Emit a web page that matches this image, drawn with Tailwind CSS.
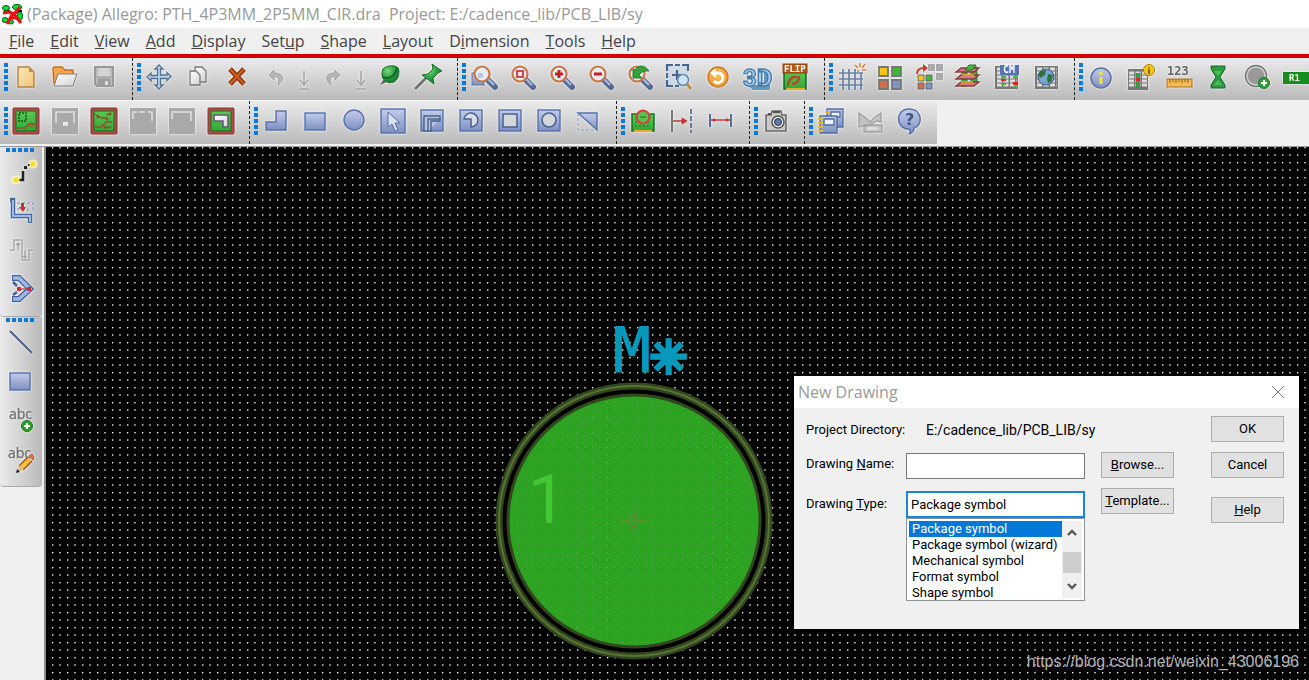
<!DOCTYPE html>
<html lang="en">
<head>
<meta charset="utf-8">
<title>Allegro Package Designer</title>
<script src="https://cdn.jsdelivr.net/npm/@tailwindcss/browser@4"></script>
</head>
<body class="flex h-screen flex-col overflow-hidden bg-[#f0f0f0] font-['Open_Sans','Noto_Sans',sans-serif] text-[#444]">

<svg class="absolute size-0" aria-hidden="true">
  <defs>
    <linearGradient id="blue" x1="0" y1="0" x2="0" y2="1"><stop offset="0" stop-color="#c3ccea"/><stop offset="1" stop-color="#7d90c4"/></linearGradient>
    <linearGradient id="green" x1="0" y1="0" x2="0" y2="1"><stop offset="0" stop-color="#55cc50"/><stop offset="1" stop-color="#35a535"/></linearGradient>
    <linearGradient id="sand" x1="0" y1="0" x2="1" y2="1"><stop offset="0" stop-color="#fbe9b8"/><stop offset="1" stop-color="#eec678"/></linearGradient>
    <linearGradient id="paper" x1="0" y1="0" x2="1" y2="1"><stop offset="0" stop-color="#fff"/><stop offset="1" stop-color="#d2d2d2"/></linearGradient>
    <radialGradient id="ball" cx=".35" cy=".3" r=".8"><stop offset="0" stop-color="#7ddb7a"/><stop offset=".5" stop-color="#2ba043"/><stop offset="1" stop-color="#0f6c24"/></radialGradient>
    <radialGradient id="orange" cx=".5" cy=".4" r=".6"><stop offset="0" stop-color="#fbc060"/><stop offset="1" stop-color="#f09a35"/></radialGradient>
    <pattern id="dots" width="15" height="15" patternUnits="userSpaceOnUse" x="6" y="0">
      <rect width="1" height="1" fill="#fff"/><rect y="1" width="1" height="1" fill="#777"/><rect x="1" width="1" height="1" fill="#555"/>
      <rect x="7" width="2" height="1" fill="#aaa"/><rect x="7" y="1" width="2" height="1" fill="#444"/>
      <rect y="7" width="1" height="2" fill="#aaa"/><rect x="1" y="7" width="1" height="2" fill="#444"/>
      <rect x="7" y="7" width="2" height="2" fill="#777"/>
    </pattern>
  </defs>
</svg>

<header class="flex h-7 shrink-0 items-center gap-px bg-white pl-0.5">
  <svg class="size-6 shrink-0" viewBox="0 0 24 24" aria-hidden="true">
    <path d="M2 9h5l4 4 6-4 3 0M3 20l4-1 2-3 5 0 4 3M11 6l4-2 4 3" stroke="#111" stroke-width="2" fill="none"/>
    <g fill="#0be03a" stroke="#075a16"><ellipse cx="4" cy="6" rx="3.5" ry="2.5"/><ellipse cx="15" cy="5" rx="4.5" ry="2.5"/><ellipse cx="3" cy="18" rx="3" ry="2.5"/><ellipse cx="18" cy="14" rx="2.5" ry="4"/><ellipse cx="9" cy="20" rx="2.5" ry="2"/></g>
    <path d="M1 11l6-1 5 2 6-7M5 22l5-9M11 11l8 10M7 16h8" stroke="#e81414" stroke-width="3.2" fill="none"/>
  </svg>
  <h1 class="text-base whitespace-pre text-[#999]">(Package) Allegro: PTH_4P3MM_2P5MM_CIR.dra  Project: E:/cadence_lib/PCB_LIB/sy</h1>
</header>

<nav class="flex h-[26px] shrink-0 items-center gap-4 pl-[9px] text-base" aria-label="Menu bar">
  <button><u>F</u>ile</button><button><u>E</u>dit</button><button><u>V</u>iew</button><button><u>A</u>dd</button><button><u>D</u>isplay</button><button>Set<u>u</u>p</button><button><u>S</u>hape</button><button><u>L</u>ayout</button><button>D<u>i</u>mension</button><button><u>T</u>ools</button><button><u>H</u>elp</button>
</nav>
<div class="h-1 shrink-0 bg-[#d20000]"></div>

<div id="row1" class="flex h-[43px] shrink-0 overflow-hidden border-b border-[#f4f4f4]"></div>
<div id="row2" class="flex h-[43px] shrink-0"></div>

<div class="mt-[2px] flex min-h-0 flex-1 border-t border-[#999]">
  <aside id="side" class="flex w-[46px] shrink-0 flex-col border-r-2 border-[#8c8c8c] pr-[2px]"></aside>

  <main class="relative min-w-0 flex-1 overflow-hidden bg-black">
    <svg class="absolute inset-0 size-full" aria-label="Drawing canvas">
      <rect width="100%" height="100%" fill="url(#dots)"/>
      <g fill="none">
        <circle cx="588" cy="374" r="135" fill="#000" stroke="#33471e" stroke-width="7"/>
        <circle cx="588" cy="374" r="135" stroke="#567434" stroke-width="2"/>
        <circle cx="588" cy="374" r="126" fill="#2ca321" stroke="#33471e" stroke-width="3"/>
      </g>
      <circle cx="588" cy="374" r="123" fill="url(#dots)" opacity=".3"/>
      <g stroke="#70853a" fill="none"><circle cx="588" cy="374" r="6"/><path d="M575 374h26M588 361v26"/></g>
      <text x="567" y="225" font-family="DejaVu Sans Mono" font-size="63" fill="#0699bb" stroke="#0699bb" stroke-width="1">M</text>
      <text x="604" y="226" font-family="DejaVu Sans" font-size="45" fill="#0699bb" stroke="#0699bb" stroke-width="4">✳</text>
      <text x="482" y="376" font-family="Roboto" font-size="68" fill="#45c734">1</text>
    </svg>

    <section role="dialog" aria-labelledby="dlg" class="absolute top-[229px] right-2.5 h-[253px] w-[505px] bg-[#f0f0f0] text-[13px] leading-4 text-black font-['Roboto',sans-serif]">
      <div class="flex h-8 items-center justify-between bg-white pr-3.5 pl-1">
        <h2 id="dlg" class="font-['Open_Sans','Noto_Sans',sans-serif] text-base text-[#999]">New Drawing</h2>
        <button aria-label="Close"><svg class="size-[14px]" viewBox="0 0 14 14" stroke="#777" fill="none"><path d="M1 1l12 12M13 1L1 13"/></svg></button>
      </div>
      <form class="flex pt-2 pr-[15px] pl-3">
        <div class="grid flex-none grid-cols-[100px_179px] grid-rows-[28px_35px_39px] items-center">
          <span class="whitespace-nowrap">Project Directory:</span><span class="pl-5 text-sm leading-4">E:/cadence_lib/PCB_LIB/sy</span>
          <label for="dn" class="pt-1">Drawing <u>N</u>ame:</label>
          <input id="dn" type="text" class="h-[26px] w-full self-end border border-[#777] bg-white px-1">
          <label for="dt" class="self-end pb-1.5">Drawing <u>T</u>ype:</label>
          <div class="relative self-end">
            <select id="dt" class="block h-[27px] w-full appearance-none border-2 border-[#1b84dc] bg-white px-[3px]"><option>Package symbol</option><option>Package symbol (wizard)</option><option>Mechanical symbol</option><option>Format symbol</option><option>Shape symbol</option></select>
            <div class="absolute top-full left-0 flex h-[83px] w-full overflow-hidden border border-[#8a929c] bg-white p-[2px]">
              <ul role="listbox" class="flex-1">
                <li role="option" aria-selected="true" class="bg-[#0078d7] pl-[3px] text-white">Package symbol</li><li role="option" class="pl-[3px] whitespace-nowrap">Package symbol (wizard)</li><li role="option" class="pl-[3px]">Mechanical symbol</li><li role="option" class="pl-[3px]">Format symbol</li><li role="option" class="pl-[3px]">Shape symbol</li>
              </ul>
              <div class="flex w-5 shrink-0 flex-col items-center justify-between bg-[#f0f0f0] py-1">
                <button type="button" aria-label="Scroll up"><svg class="block h-4 w-[10px]" viewBox="0 0 10 16" fill="none" stroke="#555" stroke-width="2.4"><path d="M1 10l4-4 4 4"/></svg></button>
                <span class="mt-1.5 h-[21px] w-[18px] bg-[#cdcdcd]"></span>
                <button type="button" aria-label="Scroll down"><svg class="block h-4 w-[10px]" viewBox="0 0 10 16" fill="none" stroke="#555" stroke-width="2.4"><path d="M1 6l4 4 4-4"/></svg></button>
              </div>
            </div>
          </div>
        </div>
        <div class="mt-9 ml-4 flex w-[73px] flex-col gap-2.5">
          <button type="button" class="h-[26px] border border-[#adadad] bg-[#e1e1e1]"><u>B</u>rowse...</button>
          <button type="button" class="h-[26px] border border-[#adadad] bg-[#e1e1e1]"><u>T</u>emplate...</button>
        </div>
        <div class="ml-auto flex w-[73px] flex-col">
          <button type="button" class="h-[26px] border border-[#adadad] bg-[#e1e1e1]">OK</button>
          <button type="button" class="mt-2.5 h-[26px] border border-[#adadad] bg-[#e1e1e1]">Cancel</button>
          <button type="button" class="mt-[19px] h-[26px] border border-[#adadad] bg-[#e1e1e1]"><u>H</u>elp</button>
        </div>
      </form>
    </section>
    <p class="absolute right-2.5 bottom-1.5 font-['Liberation_Sans',sans-serif] text-base text-[#b4b4b4]">https://blog.csdn.net/weixin_43006196</p>
  </main>
</div>

<script>
const B = 'fill="url(#blue)" stroke="#5570a5" stroke-width="1.4"';
const lens = (inner) => `<path d="M19 19l7 7" stroke="#566894" stroke-width="6" stroke-linecap="round"/><path d="M18 17l7 7" stroke="#a9b8d8" stroke-width="2.4"/><circle cx="13" cy="13" r="7.5" fill="#e6ecf5" stroke="#c87742" stroke-width="2.2"/>${inner}`;
const board = (inner) => `<rect x="3" y="3" width="26" height="26" rx="1" fill="#b64a48" stroke="#7c3030"/><rect x="6" y="6" width="20" height="20" fill="url(#green)" stroke="#186c22"/>${inner}`;
const grayBoard = (inner) => `<rect x="3" y="3" width="26" height="26" fill="#a9a9a9"/>${inner}`;
const cells = (x, y) => `<rect x="${x}" y="${y}" width="23" height="23" fill="#777"/><path d="M${x+2} ${y+3}h20M${x+2} ${y+7}h20M${x+2} ${y+11}h20M${x+2} ${y+15}h20M${x+2} ${y+19}h20" stroke="#ddd" stroke-width="2.8" stroke-dasharray="5 1.5"/>`;
const I = {
 new: ['New', '<path d="M8 6h11l5 5v15H8z" fill="url(#sand)" stroke="#b9803c" stroke-width="1.4"/><path d="M19 6v5h5z" fill="#c98c42"/>'],
 open: ['Open', '<path d="M5 23L4 8q0-2 2-2h7l3 3h8v4" fill="#f6a64c" stroke="#c06d1f" stroke-width="1.4"/><path d="M5 25l4-12h19l-4 12z" fill="url(#paper)" stroke="#7d7d7d"/>'],
 save: ['Save', '<path d="M7 6h18v19H9l-2-2z" fill="#bdbdbd" stroke="#999" stroke-width="2"/><path d="M10 7h12v8H10z" fill="#d4d4d4"/><path d="M7 16h18M10 18h12v7H10z" fill="#9e9e9e" stroke="#9e9e9e"/><path d="M17 20h3v4h-3z" fill="#ddd"/>'],
 move: ['Move', '<path d="M16 4l4 4h-2.500v6H24v-2.500l4 4-4 4V17.500h-6.500V24H20l-4 4-4-4h2.500v-6.500H8V20l-4-4 4-4v2.500h6.500V8H12z" fill="#b9d2e4" stroke="#4f7190" stroke-width="1.3"/>'],
 copy: ['Copy', '<path d="M13 6h7l4 4v11H13z" fill="url(#paper)" stroke="#777" stroke-width="1.3"/><path d="M8 10h6l4 4v10H8z" fill="url(#paper)" stroke="#777" stroke-width="1.3"/>'],
 del: ['Delete', '<path d="M9 8l14 15M23 8L9 23" stroke="#7b2c08" stroke-width="5"/><path d="M9 8l14 15M23 8L9 23" stroke="#cc5a1b" stroke-width="2.6"/>'],
 undo: ['Undo', '<path d="M14 9l-5 5 5 5v-3c4-1 6 1 4 8 6-4 7-12-4-12z" fill="#b6b6b6" stroke="#a0a0a0"/>'],
 redo: ['Redo', '<path d="M18 9l5 5-5 5v-3c-4-1-6 1-4 8-6-4-7-12 4-12z" fill="#b6b6b6" stroke="#a0a0a0"/>'],
 down: ['More', '<path d="M16 10v13M12 19l4 5 4-5M11 28h10" stroke="#a5a5a5" stroke-width="1.6" fill="none"/>'],
 pushin: ['Fix', '<path d="M6 24l5-8 4 4z" fill="#666"/><path d="M9 8q4-4 12-3 4 1 4 5 0 8-5 11-5 2-9-1-5-5-2-12z" fill="url(#ball)" stroke="#14712a"/><path d="M9 16c6 3 13-2 14-9" stroke="#0f6424" fill="none" stroke-width="1.8"/>'],
 pin: ['Unfix', '<path d="M2 28L13 17" stroke="#6e6e6e" stroke-width="2.5"/><path d="M19 3l10 7-4 2-5 5 1 6L9 14l6-1 5-5z" fill="url(#ball)" stroke="#176b2a"/>'],
 zoomwin: ['Zoom window', '<rect x="4" y="12" width="12" height="12" fill="url(#blue)" stroke="#60759f"/><g transform="translate(1)">'+lens('<path d="M9 12h5v5H9z" fill="#b9c5e0"/>')+'</g>'],
 zoomfit: ['Zoom fit', lens('<rect x="10" y="10" width="6" height="6" fill="#f7e4e4" stroke="#c63b3b" stroke-width="1.8"/>')],
 zoomin: ['Zoom in', lens('<path d="M13 9v8M9 13h8" stroke="#c02222" stroke-width="3"/>')],
 zoomout: ['Zoom out', lens('<path d="M9 13h8" stroke="#c02222" stroke-width="3"/>')],
 zoomprev: ['Zoom previous', lens('<path d="M9 8l0 9 9 0-3-3c3-4 6-4 10-4-4-6-10-7-14-1z" fill="#35a23c" stroke="#176b2a" stroke-width=".8"/>')],
 zoomsel: ['Zoom selection', '<path d="M4 4h21v21H4z" fill="#b9cbdc" opacity=".6"/><g stroke="#47688e" stroke-width="2.2" fill="none"><path d="M4 10V4h6M12 4h5M19 4h6v6M4 12v5M4 19v6h6M9 14h10M14 9v10M12 25h4"/></g><circle cx="20" cy="19" r="5.5" fill="#cfe5f5" stroke="#5d88b0" stroke-width="1.5"/><path d="M24 23l4 5" stroke="#c18b45" stroke-width="3"/>'],
 redraw: ['Redraw', '<circle cx="16" cy="16" r="10" fill="url(#orange)" stroke="#ca7a2b" stroke-width="1.5"/><path d="M12 12h5a5 5 0 1 1-5 8" stroke="#fff" stroke-width="3" fill="none"/><path d="M8 12l6-5v10z" fill="#fff"/>'],
 three: ['3D view', '<path d="M6 24h18l5 5H12z" fill="#6695bd"/><path d="M23 8l6 4v17l-6-5z" fill="#6695bd"/><text x="2" y="25" font-family="Roboto" font-weight="bold" font-size="26" style="font-size:24px" fill="#a8d0ee" stroke="#477ba8" stroke-width="1.4">3D</text>'],
 flip: ['Flip', '<rect x="4" y="11" width="22" height="17" fill="url(#green)" stroke="#126820" stroke-width="1.5"/><path d="M8 25c0-7 5-10 9-9M19 15c0 6-3 8-7 8" stroke="#b7442b" stroke-width="2.4" fill="none"/><path d="M6 28h19" stroke="#e2b028" stroke-width="2"/><rect x="3" y="3" width="24" height="9" fill="#b95c1a" stroke="#883d0b"/><text x="4" y="11" font-family="DejaVu Sans Mono" font-weight="bold" font-size="9" fill="#fff">FLIP</text>'],
 grid: ['Grid', '<path d="M8 8v21M14 8v21M20 8v21M26 12v17M4 12h24M4 18h24M4 24h24" stroke="#6a80a5" stroke-width="1.7"/><path d="M25 2v4M20 4l3 3M30 3l-3 4M31 9h-4M22 10h2" stroke="#d1823e" stroke-width="1.5"/>'],
 colors: ['Colors', '<g stroke="#777" stroke-width="1.8"><path d="M5 6h9v9H5z" fill="#f9c713"/><path d="M18 6h9v9h-9z" fill="#40b733"/><path d="M5 19h9v9H5z" fill="#cf6f50"/><path d="M18 19h9v9h-9z" fill="#8094cc"/></g>'],
 colors2: ['Color priority', '<path d="M15 3h7v7h-7zM23 3h7v7h-7zM23 12h7v7h-7z" fill="#aaa"/><g stroke="#666"><path d="M5 14h6v6H5z" fill="#f9c713"/><path d="M13 14h6v6h-6z" fill="#40b733"/><path d="M5 22h6v6H5z" fill="#cf6f50"/><path d="M13 22h6v6h-6z" fill="#8094cc"/></g><path d="M4 13c0-4 3-6 7-6" stroke="#c23c32" stroke-width="2" fill="none"/><path d="M10 3l5 4-5 4z" fill="#c23c32"/>'],
 layers: ['Cross section', '<path d="M10 10h5v15h-5zM19 6h6v15h-6z" fill="#3fae3f" stroke="#22722b"/><g fill="#d87a7c" stroke="#823a3c" stroke-width="1.3"><path d="M4 25l5-4h18l-5 4z"/><path d="M4 18l5-4h18l-5 4z"/><path d="M4 11l5-4h18l-5 4z"/></g><path d="M9 21h12M10 14h12" stroke="#e0b83a" stroke-width="1.5"/><path d="M17 4h7l-4 5h-7z" fill="#49b747" stroke="#22722b"/>'],
 cm: ['Constraint manager', cells(4,5)+'<rect x="9" y="4" width="19" height="10" fill="#5573ac"/><text x="12" y="12" font-family="DejaVu Sans Mono" font-weight="bold" font-size="10" fill="#fff">CM</text><path d="M10 15h5v2h-5zM10 22h5v2h-5zM22 15h5v2h-5zM22 25h5v2h-5z" fill="#3abb40"/><path d="M10 18h5v2h-5zM22 21h5v3h-5z" fill="#e22222"/>'],
 globe: ['Spreadsheet', cells(5,5)+'<circle cx="16" cy="16" r="8" fill="#7da0d4" stroke="#3a588b"/><path d="M11 10l5-1-1 5-5 3-2-4zM18 13l5 1-2 7-3 1-1-4z" fill="#28743a"/>'],
 info: ['Show element', '<circle cx="16" cy="17" r="10" fill="url(#blue)" stroke="#5b6f9e" stroke-width="1.5"/><path d="M16 11v3M16 16v7" stroke="#f7e52c" stroke-width="3"/>'],
 cminfo: ['Show constraint', '<rect x="4" y="8" width="20" height="21" fill="#777"/><path d="M5 12h18M5 16h18M5 20h18M5 24h18" stroke="#ddd" stroke-width="2.800" stroke-dasharray="5 1.5"/><path d="M12 12h4v15h-4z" fill="#3a9d3f"/><path d="M12 17h4v3h-4z" fill="#d52a2a"/><circle cx="25" cy="9" r="5.500" fill="#f5c813" stroke="#a77d12"/><path d="M25 6v1M25 8v5" stroke="#6a4b00" stroke-width="1.600"/>'],
 ruler: ['Measure', '<text x="4" y="14" font-family="DejaVu Sans Mono" font-weight="bold" font-size="12" fill="#666">123</text><rect x="4" y="18" width="25" height="8" fill="#f3bb52" stroke="#b06b1d"/><path d="M7 18v4M10 18v3M13 18v4M16 18v3M19 18v4M22 18v3M25 18v4" stroke="#8c5515"/>'],
 hour: ['Waive DRC', '<path d="M9 5h14v3l-5 8 5 8v3H9v-3l5-8-5-8z" fill="#2d9b42" stroke="#136427"/><path d="M12 10h8l-4 5zM12 24l4-5 4 5z" fill="#4ac154"/>'],
 addc: ['Add circle', '<circle cx="15" cy="15" r="10.5" fill="#999" stroke="#777" stroke-width="1.5"/><circle cx="15" cy="15" r="9" fill="none" stroke="#ccc" stroke-width="1.5"/><circle cx="23" cy="22" r="5.5" fill="#32a038" stroke="#1c7424"/><path d="M23 19v6M20 22h6" stroke="#fff" stroke-width="2"/>'],
 r1: ['Assign refdes', '<rect x="3" y="11" width="26" height="12" fill="#158d1d"/><text x="9" y="20" font-family="DejaVu Sans Mono" font-weight="bold" font-size="9" fill="#fff">R1</text>'],
 b1: ['Shape edit', board('<path d="M9 8h7v8H9z" fill="none" stroke="#14561c" stroke-width="1.5" stroke-dasharray="2 1"/><path d="M7 23h8l4-4h6" stroke="#8d5030" stroke-width="1.5" fill="none"/><circle cx="21" cy="20" r="2" fill="none" stroke="#8d5030"/>')],
 b2: ['Placement edit', grayBoard('<path d="M7 18V7h18v11" stroke="#e2e2e2" stroke-width="1.5" fill="none"/><path d="M14 17h5v4h-2v-1h-1v1h-2z" fill="#e8e8e8"/>')],
 b3: ['Etch edit', board('<path d="M7 9l7 4h5M7 22h6l5-5h6M17 23l6-1M18 10l5-2" stroke="#8d5030" stroke-width="1.4" fill="none"/><circle cx="19" cy="14" r="1.500" fill="#8d5030"/><circle cx="10" cy="12" r="1.500" fill="#8d5030"/><circle cx="22" cy="9" r="1.500" fill="#8d5030"/><circle cx="17" cy="22" r="1.500" fill="#8d5030"/>')],
 b4: ['Signal integrity', grayBoard('<path d="M6 14V7h4M12 7h6M21 7h4v9" stroke="#e2e2e2" stroke-width="1.5" fill="none"/>')],
 b5: ['RF edit', grayBoard('<path d="M6 14V7h19v9" stroke="#e2e2e2" stroke-width="1.5" fill="none"/>')],
 b6: ['General edit', board('<path d="M9 10h14v12h-5v-6H9z" fill="url(#paper)" stroke="#6d5080" stroke-width="1.5"/>')],
 poly: ['Polygon', `<path d="M6 17h10V6h10v19H6z" ${B}/>`],
 rect: ['Rectangle', `<rect x="6" y="8" width="20" height="17" ${B}/>`],
 circ: ['Circle', `<circle cx="16" cy="15" r="10" ${B}/>`],
 sel: ['Select shape', `<rect x="4" y="4" width="24" height="24" ${B}/><path d="M11 7v15l4-3 3 7 3-1-3-7h5z" fill="#dbe2f3" stroke="#5570a5"/>`],
 vpoly: ['Polygon void', `<rect x="5" y="5" width="22" height="21" ${B}/><path d="M8 26V11h16v5h-9v10zM12 26V14h12" fill="#b9c4de" stroke="#45608f" stroke-width="1.4"/>`],
 vpie: ['Pie void', `<rect x="5" y="5" width="22" height="21" ${B}/><path d="M16 22a7 7 0 1 0-7-8h7z" fill="#d9dde3" stroke="#45608f" stroke-width="1.5"/>`],
 vrect: ['Rectangle void', `<rect x="5" y="5" width="22" height="21" ${B}/><rect x="9" y="9" width="14" height="13" fill="#d4d6da" stroke="#45608f" stroke-width="1.5"/>`],
 vcirc: ['Circle void', `<rect x="5" y="5" width="22" height="21" ${B}/><circle cx="16" cy="15" r="7" fill="#d4d6da" stroke="#45608f" stroke-width="1.5"/>`],
 vdel: ['Delete void', `<path d="M6 8h19v17z" ${B}/><path d="M6 8v17h19" fill="none" stroke="#8296bb" stroke-dasharray="3 2"/>`],
 bcirc: ['Pad designer', '<rect x="5" y="9" width="22" height="17" fill="url(#green)" stroke="#127020" stroke-width="1.5"/><path d="M7 26h18" stroke="#e2b028" stroke-width="2"/><path d="M8 13h16M8 17h16M8 21h16" stroke="#167020" stroke-dasharray="2 2"/><circle cx="16" cy="12" r="6.5" fill="#58c24c" stroke="#d3423d" stroke-width="2.2"/><path d="M13 12h6" stroke="#167020"/>'],
 dim1: ['Datum dimension', '<path d="M6 5v22" stroke="#777" stroke-width="2"/><path d="M25 4v24" stroke="#45608f" stroke-width="1.6" stroke-dasharray="5 2"/><path d="M7 16h12" stroke="#b93338" stroke-width="1.5"/><path d="M16 13l5 3-5 3z" fill="#c93338" stroke="#c93338"/>'],
 dim2: ['Linear dimension', '<path d="M5 9v13M26 9v13" stroke="#45608f" stroke-width="1.8"/><path d="M6 15h19" stroke="#c93338" stroke-width="1.5"/><path d="M6 15l4-2v4zM25 15l-4-2v4z" fill="#c93338"/>'],
 cam: ['Capture', '<path d="M6 10h5l1-4h9l1 4h4v16H6z" fill="#c9c9c9" stroke="#666" stroke-width="1.5"/><path d="M8 9h3M13 7h7" stroke="#555" stroke-width="2"/><circle cx="18" cy="17" r="6" fill="#eee" stroke="#555" stroke-width="1.5"/><circle cx="18" cy="17" r="3.5" fill="#607ab0" stroke="#333"/>'],
 notes: ['Reports', '<g stroke="#526c9f" stroke-width="1.3"><path d="M12 4h16v18H12z" fill="url(#blue)"/><path d="M16 7h9v5h-9z" fill="#edf1fa"/><path d="M5 11h17v17H5z" fill="url(#blue)"/><path d="M9 14h10v6H9z" fill="#edf1fa"/></g><path d="M3 14h5M3 18h5M3 22h5M3 26h5M10 7h5" stroke="#e7b72b" stroke-width="2"/>'],
 mail: ['Export', '<path d="M5 8l6 4 5 5 5-5 6-4v9l-4-1-7 4-11 2zM10 20h18v7H10z" fill="#c2c2c2" stroke="#a2a2a2" stroke-width="1.4"/><path d="M13 22h11v3H13z" fill="#ddd"/>'],
 help: ['Help', '<path d="M16 4c14 0 14 17 5 19 0 3-2 5-5 6 2-2 1-4 0-5C2 24 2 4 16 4z" fill="url(#blue)" stroke="#5a70a4" stroke-width="1.5"/><text x="12" y="20" font-family="DejaVu Sans" font-weight="bold" font-size="16" fill="#42557f">?</text>'],
 net: ['Add connect', '<path d="M11 24h8v-9" stroke="#222" stroke-width="2.600" fill="none"/><path d="M20 10h3v3h-3zM24 8h3v2h-3z" fill="#222"/><path d="M9 21h6v6H9zM26 5h6v6h-6z" fill="#f0de32" stroke="#fff8b0"/>'],
 slide: ['Slide', '<path d="M6 5h3v16h17v7" stroke="#45679f" stroke-width="4.500" fill="none"/><path d="M9 5v16h17v6" stroke="#9fb9e4" stroke-width="2" fill="none"/><path d="M13 8h16v9M13 14h11v4" stroke="#6f89bd" stroke-dasharray="3 2" fill="none"/><path d="M17 8v4h-2l4 5 3-5h-2V8z" fill="#c7323a"/>'],
 delay: ['Delay tune', '<path d="M6 16h4V6h8v20h7V16h5M14 16V9M12 11l2-2 2 2M21 16v7M19 22l2 2 2-2" stroke="#a3a3a3" stroke-width="1.4" fill="none"/>'],
 smooth: ['Custom smooth', '<path d="M8 5h7l11 11-11 10H8" stroke="#40609b" stroke-width="6" fill="none"/><path d="M9 5h6l11 11-11 10H9" stroke="#9fb9e4" stroke-width="3.5" fill="none"/><path d="M9 9l4 4M9 22l4-3" stroke="#40609b" stroke-width="2.500"/><path d="M13 16h14" stroke="#a44" stroke-width="1.3"/><path d="M13 14h4v4h-4zM23 14h4v4h-4z" fill="#bd3238"/>'],
 line: ['Add line', '<path d="M6 5l22 22" stroke="#4c628a" stroke-width="2.2"/>'],
 abcadd: ['Add text', '<text x="5" y="15" font-family="Open Sans" font-size="14" fill="#777" stroke="#777" stroke-width=".5">abc</text><circle cx="23" cy="22" r="5.5" fill="#28a22d" stroke="#187720"/><path d="M23 19v6M20 22h6" stroke="#fff" stroke-width="2"/>'],
 abced: ['Edit text', '<text x="4" y="15" font-family="Open Sans" font-size="14" fill="#777" stroke="#777" stroke-width=".5">abc</text><path d="M17 25l9-9" stroke="#8c551f" stroke-width="7"/><path d="M17 25l9-9" stroke="#fbbf39" stroke-width="4.500"/><path d="M25 13l4 4 1-3-2-3z" fill="#e3735c" stroke="#b5543f"/><path d="M15 22l5 5-7 2z" fill="#d9bd91"/><path d="M12 30l1-4 3 3z" fill="#222"/>'],
};
const button = (k) => {
  const small = k === 'down';
  return `<button aria-label="${I[k][0]}" class="${small ? '-mx-[3px] h-8 w-[17px] shrink-0' : 'size-8 shrink-0'}"><svg class="size-full overflow-visible drop-shadow-[0_0_1px_#fff]" viewBox="${small ? '8 0 17 32' : '0 0 32 32'}" fill="none">${I[k][1]}</svg></button>`;
};
const dot = '<i class="size-1 bg-[#0a7ad8]"></i>';
const hGroup = (keys) => `<div role="toolbar" class="flex shrink-0 items-center gap-[7px] border-r border-dashed border-[#222] bg-linear-to-b from-[#ebebeb] to-[#bababa] pr-3 pb-1 pl-1"><span class="-mr-[5px] flex flex-col gap-[2px]">${dot.repeat(5)}</span>${keys.map(button).join('')}</div>`;
document.getElementById('row1').innerHTML = [
  ['new','open','save'],
  ['move','copy','del','undo','down','redo','down','pushin','pin'],
  ['zoomwin','zoomfit','zoomin','zoomout','zoomprev','zoomsel','redraw','three','flip'],
  ['grid','colors','colors2','layers','cm','globe'],
  ['info','cminfo','ruler','hour','addc','r1'],
].map(hGroup).join('');
const row2 = document.getElementById('row2');
row2.innerHTML = [
  ['b1','b2','b3','b4','b5','b6'],
  ['poly','rect','circ','sel','vpoly','vpie','vrect','vcirc','vdel'],
  ['bcirc','dim1','dim2'],
  ['cam'],
  ['notes','mail','help'],
].map(hGroup).join('');
row2.lastElementChild.classList.remove('border-r');
const vGroup = (keys) => `<div role="toolbar" class="flex flex-col items-center gap-[7px] rounded-b-sm border-b border-[#aaa] bg-linear-to-r from-[#ebebeb] to-[#bababa] pt-px pr-[3px] pb-[11px]"><span class="-mb-[3px] flex gap-[2px]">${dot.repeat(5)}</span>${keys.map(button).join('')}</div>`;
document.getElementById('side').innerHTML = [['net','slide','delay','smooth'],['line','rect','abcadd','abced']].map(vGroup).join('');
</script>
</body>
</html>
